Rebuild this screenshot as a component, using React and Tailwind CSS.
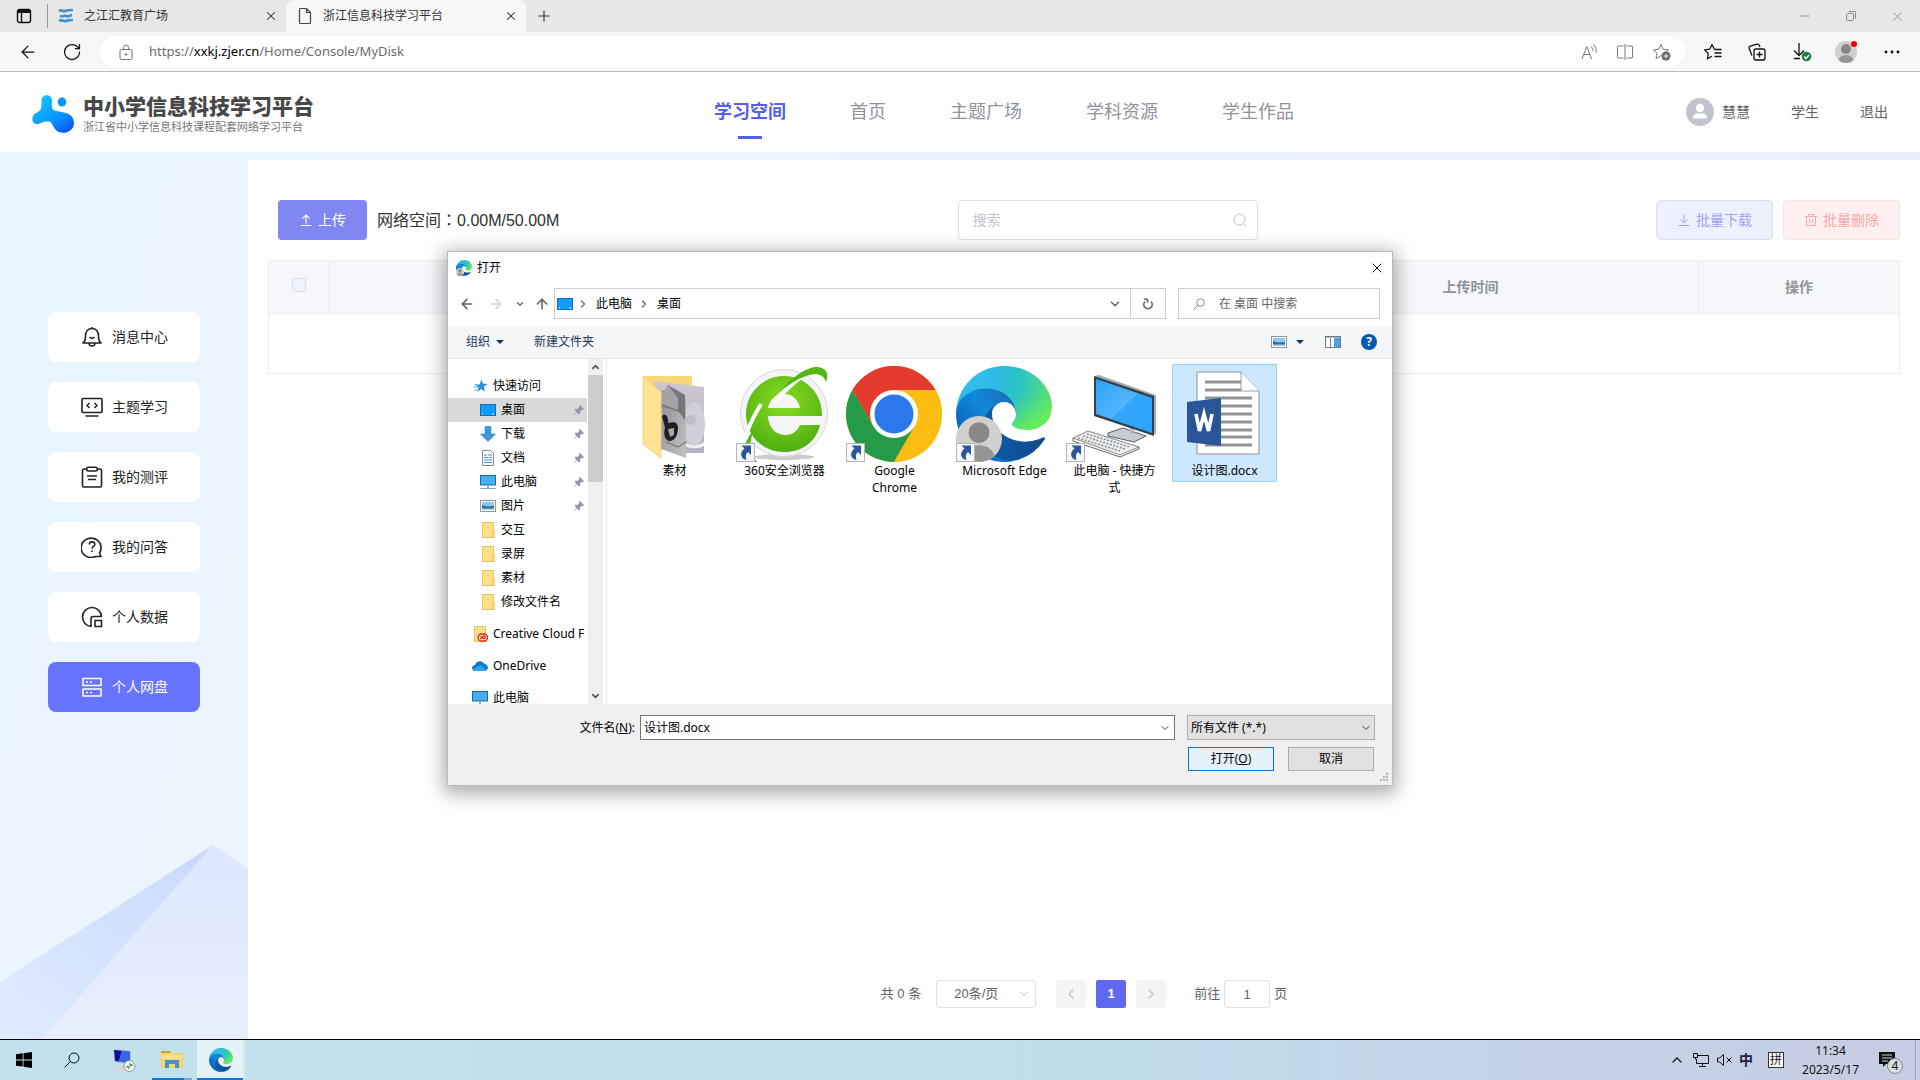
import { useState } from 'react';
import {
  ArrowLeft, ArrowRight, ArrowUp, ChevronDown, ChevronLeft, ChevronRight, ChevronUp,
  Minus, Plus, RotateCw, X,
} from 'lucide-react';

const EdgeLogo = ({ id, className }) => (
  <svg viewBox="0 0 256 256" className={className} aria-hidden="true">
    <defs>
      <linearGradient id={`${id}a`} x1="0.25" y1="0.5" x2="1" y2="0.5">
        <stop offset="0" stopColor="#0c59a4" /><stop offset="1" stopColor="#114a8b" />
      </linearGradient>
      <linearGradient id={`${id}b`} x1="0.9" y1="0.2" x2="0.2" y2="0.9">
        <stop offset="0" stopColor="#1b6fb8" /><stop offset="0.4" stopColor="#1189dd" /><stop offset="1" stopColor="#0a5db5" />
      </linearGradient>
      <radialGradient id={`${id}c`} cx="0.1" cy="0.2" r="1">
        <stop offset="0" stopColor="#35c1f1" /><stop offset="0.3" stopColor="#2fb9e6" />
        <stop offset="0.58" stopColor="#2bc3c4" /><stop offset="1" stopColor="#66eb5a" />
      </radialGradient>
    </defs>
    <g transform="translate(-4.63 -4.92)">
      <path fill={`url(#${id}a)`} d="M235.68 195.46a93.73 93.73 0 0 1-10.54 4.71 101.87 101.87 0 0 1-35.9 6.46c-47.32 0-88.54-32.55-88.54-74.32A31.48 31.48 0 0 1 117.13 105c-42.8 1.8-53.8 46.4-53.8 72.53 0 73.88 68.09 81.37 82.76 81.37 7.91 0 19.84-2.3 27-4.56l1.31-.44a128.34 128.34 0 0 0 66.6-52.8 4 4 0 0 0-5.32-5.64Z" />
      <path fill={`url(#${id}b)`} d="M110.34 246.34A79.2 79.2 0 0 1 87.6 225a80.72 80.72 0 0 1 29.53-120c3.12-1.47 8.45-4.13 15.54-4a32.35 32.35 0 0 1 25.69 13 31.88 31.88 0 0 1 6.36 18.66c0-.21 24.46-79.6-80-79.6-43.9 0-80 41.66-80 78.21a130.15 130.15 0 0 0 12.11 56 128 128 0 0 0 156.38 67.11 75.55 75.55 0 0 1-62.78-8Z" />
      <path fill={`url(#${id}c)`} d="M156.94 153.78c-.81 1.05-3.3 2.5-3.3 5.66 0 2.61 1.7 5.12 4.72 7.23 14.38 10 41.49 8.68 41.56 8.68a59.56 59.56 0 0 0 30.27-8.35 61.38 61.38 0 0 0 30.43-52.88c.26-22.41-8-37.31-11.34-43.91-21.19-41.45-66.93-65.29-116.67-65.29a128 128 0 0 0-128 126.2c.48-36.54 36.8-66.05 80-66.05 3.5 0 23.46.34 42 10.07 16.34 8.58 24.9 18.94 30.85 29.21 6.18 10.67 7.28 24.15 7.28 29.52s-2.74 13.33-7.8 19.91Z" />
    </g>
  </svg>
);

const ShortcutArrow = () => (
  <svg viewBox="0 0 19 19" className="absolute bottom-0 left-0 w-[19px] h-[19px]" aria-hidden="true">
    <rect x="0.5" y="0.5" width="18" height="18" fill="#f8f8f8" stroke="#b5b5b5" />
    <path d="M5.500 2.500h9.500v9.500l-3-3C9.500 11 9.500 13.500 10.500 17C4 15.500 3.500 9.500 8.500 5.500Z" fill="#2b579a" />
  </svg>
);

const UserBadge = ({ className }) => (
  <svg viewBox="0 0 44 44" className={className} aria-hidden="true">
    <clipPath id="badge"><circle cx="22" cy="22" r="22" /></clipPath>
    <g clipPath="url(#badge)">
      <rect width="44" height="44" fill="#d2d0ce" />
      <circle cx="22" cy="16" r="10" fill="#8a8886" />
      <ellipse cx="22" cy="40" rx="15" ry="12" fill="#979593" />
    </g>
  </svg>
);

const FolderPhotos = () => (
  <svg viewBox="0 0 96 96" className="w-24 h-24" aria-hidden="true">
    <defs>
      <linearGradient id="photoBack" x1="0" y1="0" x2="0" y2="1">
        <stop offset="0" stopColor="#cfc7d1" /><stop offset="1" stopColor="#b4b3c1" />
      </linearGradient>
      <linearGradient id="photoFront" x1="0" y1="0" x2="1" y2="1">
        <stop offset="0" stopColor="#8e8e90" /><stop offset="1" stopColor="#c2c2c4" />
      </linearGradient>
    </defs>
    <path d="M17 10h49v60H17z" fill="#f7d874" />
    <path d="M28 15l50 6v66l-30 0z" fill="url(#photoBack)" />
    <ellipse cx="68" cy="58" rx="11" ry="22" fill="#d0d0da" />
    <circle cx="65" cy="54" r="5" fill="#bdbdca" />
    <path d="M59 76c7 5 13 4 19 0v4c-6 3-13 3-19 0z" fill="#f6eef1" />
    <path d="M36 24l24 9v59l-25-9z" fill="url(#photoFront)" />
    <path d="M42 19l17 10v25l-6-8-17-6V28z" fill="#77777a" />
    <path d="M42 19l10 13v12l-16-6V28z" fill="#a3a3a5" />
    <path d="M36 50c4-4 7 2 6 7c5-1 9-2 10 4c0 9-4 14-8 14c-5 0-7-7-5-13z" fill="#202022" />
    <path d="M42 63l6-1v7l-4 2z" fill="#a9a9ac" />
    <path d="M40 76l12 5 8-5" stroke="#646466" fill="none" />
    <path d="M17 10l18 16v66l-18-14z" fill="#ffe394" stroke="#eac765" strokeWidth="0.7" />
  </svg>
);

const Browser360 = () => (
  <svg viewBox="0 0 96 96" className="w-24 h-24" aria-hidden="true">
    <defs>
      <radialGradient id="green360" cx="0.5" cy="0.35" r="0.65">
        <stop offset="0" stopColor="#8bdc22" /><stop offset="1" stopColor="#50b010" />
      </radialGradient>
    </defs>
    <ellipse cx="48" cy="91" rx="30" ry="3" fill="#ccc" />
    <circle cx="48" cy="47" r="43.5" fill="#f3f5f6" stroke="#d4d8dc" />
    <path d="M86 50H32c0 9 6 19 17 19c8 0 12-4 15-10h20C80 76 66 86 48 86C26 86 10 69 10 48S27 10 48 10s38 17 38 38z" fill="url(#green360)" />
    <path d="M32 42c2-9 8-14 16-14s14 5 16 14z" fill="#f3f5f6" />
    <path d="M38 36C56 16 70 4 82 3" stroke="#fff" strokeWidth="5" fill="none" />
    <path d="M25 38C13 58 7 72 9 82" stroke="#fff" strokeWidth="4" fill="none" />
    <path d="M41 28C59 7 78-4 88 3c4 3 4 8 2 13C86 3 68 6 41 28z" fill="#56b615" />
    <path d="M20 60C10 74 5 84 9 90c2 4 6 6 12 6c-8-8-9-21-1-36z" fill="#56b615" />
  </svg>
);

const ChromeLogo = () => (
  <svg viewBox="0 0 96 96" className="w-24 h-24" aria-hidden="true">
    <circle cx="48" cy="48" r="48" fill="#fdbd13" />
    <path d="M6.4 24A48 48 0 0 1 89.6 24H48l-20.8 36z" fill="#e33b2e" />
    <path d="M6.4 24A48 48 0 0 0 48 96L68.8 60L48 48L27.2 60z" fill="#259b48" />
    <path d="M48 24h41.6A48 48 0 0 1 48 96l20.8-36z" fill="#fdbd13" />
    <circle cx="48" cy="48" r="24" fill="#fff" />
    <circle cx="48" cy="48" r="19.5" fill="#2b77ee" />
  </svg>
);

const DesktopPc = () => (
  <svg viewBox="0 0 96 96" className="w-24 h-24" aria-hidden="true">
    <defs>
      <linearGradient id="pcScreen" x1="0" y1="0" x2="1" y2="1">
        <stop offset="0" stopColor="#29a3f8" /><stop offset="0.5" stopColor="#54b5fa" /><stop offset="0.51" stopColor="#35a7fb" /><stop offset="1" stopColor="#2ca4fd" />
      </linearGradient>
    </defs>
    <path d="M42 67l15-5 23 8-12 6-26-6z" fill="#c6ccd2" stroke="#596068" />
    <path d="M66 60v8" stroke="#b6bdc5" strokeWidth="4" />
    <path d="M28 10l5-1 57 20v39l-4 1z" fill="#a3abb3" />
    <path d="M28 10l60 20v40L28 50z" fill="#34414c" />
    <path d="M30 13l56 19v35L30 48z" fill="url(#pcScreen)" />
    <path d="M7 72l15-7 51 16-19 8z" fill="#eceef0" stroke="#888" />
    <path d="M12 72l42 13M17 70l42 13M21 68l43 13" stroke="#8b9198" strokeWidth="1.600" strokeDasharray="2 1.5" />
    <path d="M7 72v3l47 16 19-8v-2" stroke="#666" fill="none" />
  </svg>
);

const WordDoc = () => (
  <svg viewBox="0 0 96 96" className="w-24 h-24" aria-hidden="true">
    <path d="M21 6h44l18 19v63H21z" fill="#fff" stroke="#8b9299" />
    <path d="M65 6v19h18" fill="#fff" stroke="#9aa0a6" />
    <path d="M29 16h36M29 24h36M29 32h47M29 40h47M29 48h47M29 56h47M29 64h47M29 71h47M29 79h47" stroke="#939393" strokeWidth="3" />
    <path d="M11 36l34-4v48l-34-4z" fill="#2a5699" />
    <path d="M20 48l3.500 17 4.500-17 4.500 17L36 48" fill="none" stroke="#fff" strokeWidth="3.600" />
  </svg>
);

const MonitorIcon = ({ stand }) => (
  <svg viewBox="0 0 16 16" className="w-4 h-4 shrink-0" aria-hidden="true">
    <rect x="0.5" y={stand ? 1.5 : 2.5} width="15" height={stand ? 9.500 : 11} fill={stand ? '#45adf0' : '#0f9bff'} stroke="#146eae" />
    {stand ? <path d="M7 11.500h2V14H7zM0.500 14h15v1H0.500z" fill="#8ba5b8" /> : <path d="M2 12h1M12 12h2" stroke="#fff" />}
  </svg>
);

const PictureIcon = () => (
  <svg viewBox="0 0 16 16" className="w-4 h-4 shrink-0" aria-hidden="true">
    <rect x="0.5" y="2.500" width="15" height="11" fill="#fff" stroke="#8c979f" />
    <path d="M2 4h12v8H2z" fill="#8cc6f3" />
    <path d="M2 7l5 1.500 7-.5v4H2z" fill="#356f91" />
    <path d="M2 10.500h12V12H2z" fill="#a5cbe2" />
  </svg>
);

const FolderIcon = ({ cloud }) => (
  <svg viewBox="0 0 16 16" className="w-4 h-4 shrink-0" aria-hidden="true">
    <path d="M2.500 0.500h11v15h-11z" fill="#ffe08a" stroke="#e9c460" />
    <path d="M12.500 9v6.500h2V9z" fill="#fbd56d" stroke="#e0b64f" strokeWidth="0.5" />
    {cloud && (
      <g fill="none" stroke="#d92a1c" strokeWidth="1.300">
        <rect x="6" y="8" width="9.500" height="7" rx="3.500" fill="#fbe6c9" />
        <path d="M8 12.500c1.500 1 2.500-2.500 4-2.500s2 2.500 0 2.500s-2-2-3.500-2" />
      </g>
    )}
  </svg>
);

const StarIcon = () => (
  <svg viewBox="0 0 16 16" className="w-4 h-4 shrink-0" aria-hidden="true">
    <path d="M9.500 1.500l1.300 4 4.700.5-3.600 2.700 1 4.800-3.900-2.500L5.500 14l1-4.500L3.500 7l4-.5z" fill="#2b90dc" />
    <path d="M2.500 6.500h3M1.500 9h4M2.500 12h3" stroke="#65aee5" />
  </svg>
);

const DownArrowIcon = () => (
  <svg viewBox="0 0 16 16" className="w-4 h-4 shrink-0" aria-hidden="true">
    <path d="M5 0.500h6V8h4.500L8 15.500 0.500 8H5z" fill="#3b96dd" stroke="#2a7dc0" strokeWidth="0.5" />
  </svg>
);

const PaperIcon = () => (
  <svg viewBox="0 0 16 16" className="w-4 h-4 shrink-0" aria-hidden="true">
    <path d="M2.500 0.500h8l3 3v12h-11z" fill="#fff" stroke="#828b92" />
    <path d="M4 5h3M8 5h4M4 7.500h4M9 7.500h3M4 10h8M4 12.500h8" stroke="#4a93c5" />
  </svg>
);

const CloudIcon = () => (
  <svg viewBox="0 0 16 16" className="w-4 h-4 shrink-0" aria-hidden="true">
    <path d="M3 7C4 3 10 1.500 12.500 6c5 1 4 7 0 7H3.500C-1 13-1 7.500 3 7z" fill="#1278cf" />
    <path d="M1 11l8-4 5 5c-.5.700-1 1-2 1H3.500C2.500 13 1.500 12.500 1 11z" fill="#28a8ea" />
  </svg>
);

const PinIcon = () => (
  <svg viewBox="0 0 12 12" className="w-3 h-3" aria-hidden="true">
    <path d="M7 1l4 4-1 1-1-.3L7 7.500l.2 2L6 10.500 3.800 8.300 1 11l-.3-.3L3.300 7.800 1.500 6l1-1.200 2 .2L6.300 3 6 2z" fill="#8d9aa5" />
  </svg>
);

const Caret = () => (
  <svg viewBox="0 0 8 4" className="w-2 h-1" aria-hidden="true"><path d="M0 0h8L4 4z" fill="#1c355e" /></svg>
);

const SearchGlyph = ({ className }) => (
  <svg viewBox="0 0 16 16" className={className} fill="none" stroke="currentColor" aria-hidden="true">
    <circle cx="10" cy="6" r="5" /><path d="M6.500 9.500L0.500 15.500" />
  </svg>
);

// sidebar menu glyphs
const MenuGlyph = ({ name }) => (
  <svg viewBox="0 0 22 22" className="w-[22px] h-[22px]" fill="none" stroke="currentColor" strokeWidth="1.600" strokeLinejoin="round" aria-hidden="true">
    {name === 'bell' && <path d="M11 1v1.500M2 17h18c-2-1.500-2.500-3-2.500-7C17.500 5.500 15 2.500 11 2.500S4.500 5.500 4.500 10c0 4-.5 5.500-2.500 7zM8 17.500c.5 3.500 5.500 3.500 6 0M8.500 11c1.500 1.500 3.500 1.500 5 0" />}
    {name === 'code' && <path d="M2 2.500h18a1 1 0 0 1 1 1v12a1 1 0 0 1-1 1H2a1 1 0 0 1-1-1v-12a1 1 0 0 1 1-1zM4.500 20h13M8.500 7L6 9.500 8.500 12M13.500 7L16 9.500 13.500 12" />}
    {name === 'task' && <path d="M6 3H3a1.500 1.500 0 0 0-1.500 1.500v15A1.500 1.500 0 0 0 3 21h16a1.500 1.500 0 0 0 1.500-1.500v-15A1.500 1.500 0 0 0 19 3h-3M7.500 1.200h7a1.500 1.500 0 0 1 0 3.800h-7a1.500 1.500 0 0 1 0-3.800zM6 10h10M7 13.500h8" />}
    {name === 'ask' && <path d="M20 20.500h-5.500A10 9.700 0 1 1 18.500 17zM8.300 8.500c0-3.500 5.500-3.500 5.500 0 0 2-2.700 2-2.700 4.200M11 14.500v1.500" />}
    {name === 'data' && <path d="M10 20.500A9.500 9.500 0 1 1 20.500 10.500H12a2 2 0 0 0-2 2zM14 14.500h6.500v6H14z" />}
    {name === 'disk' && <path d="M2 2.500h18v7H2zM2 13h18v7H2zM5 6h2M9 6h2M5 16.500h2M9 16.500h2" />}
  </svg>
);

const menu = [
  { icon: 'bell', label: '消息中心' },
  { icon: 'code', label: '主题学习' },
  { icon: 'task', label: '我的测评' },
  { icon: 'ask', label: '我的问答' },
  { icon: 'data', label: '个人数据' },
  { icon: 'disk', label: '个人网盘' },
];

const navItems = ['学习空间', '首页', '主题广场', '学科资源', '学生作品'];

const quickAccess = [
  { label: '桌面', icon: <MonitorIcon />, pinned: true },
  { label: '下载', icon: <DownArrowIcon />, pinned: true },
  { label: '文档', icon: <PaperIcon />, pinned: true },
  { label: '此电脑', icon: <MonitorIcon stand />, pinned: true },
  { label: '图片', icon: <PictureIcon />, pinned: true },
  { label: '交互', icon: <FolderIcon /> },
  { label: '录屏', icon: <FolderIcon /> },
  { label: '素材', icon: <FolderIcon /> },
  { label: '修改文件名', icon: <FolderIcon /> },
];

const files = [
  { name: '素材', icon: <FolderPhotos /> },
  { name: '360安全浏览器', icon: <Browser360 />, shortcut: true },
  { name: 'Google Chrome', icon: <ChromeLogo />, shortcut: true },
  { name: 'Microsoft Edge', icon: <><EdgeLogo id="big" className="w-24 h-24" /><UserBadge className="absolute left-0 bottom-0 w-[46px] h-[46px]" /></>, shortcut: true },
  { name: '此电脑 - 快捷方式', icon: <DesktopPc />, shortcut: true },
  { name: '设计图.docx', icon: <WordDoc /> },
];

function BrowserChrome() {
  return (
    <div className="shrink-0 text-[#333]">
      <div className="h-8 bg-[#e7e7e7] flex items-stretch text-xs">
        <button className="w-12 flex items-center justify-center border-r border-[#999] my-1" aria-label="标签页操作">
          <svg viewBox="0 0 16 16" className="w-4 h-4" fill="none" stroke="#111" strokeWidth="1.400"><rect x="1.500" y="1.500" width="13" height="13" rx="2" /><path d="M2 3.500h12" strokeWidth="3" /><path d="M5.500 4v10" /></svg>
        </button>
        <div className="w-[238px] flex items-center pl-[10px] pr-2 gap-[10px]">
          <svg viewBox="0 0 16 16" className="w-4 h-4" fill="none" stroke="#3c93d4" strokeWidth="2.600"><path d="M1 3c3-2 4 1 6 0s4-1 8-1M2 8c3 1 4-1 6 0s4 0 6-1M1 13c3-2 5 1 7 0s4-1 7-1" /></svg>
          <span className="flex-1">之江汇教育广场</span>
          <button aria-label="关闭"><X className="w-[14px] h-[14px]" strokeWidth={1.8} /></button>
        </div>
        <div className="w-60 flex items-center pl-[11px] pr-2 gap-[10px] bg-[#f7f7f7] rounded-t-lg">
          <svg viewBox="0 0 16 18" className="w-4 h-[18px]" fill="none" stroke="#444" strokeWidth="1.200"><path d="M9.500 1.500H3.500a1 1 0 0 0-1 1v13a1 1 0 0 0 1 1h9a1 1 0 0 0 1-1V5.500zM9.500 1.500v4h4" /></svg>
          <span className="flex-1">浙江信息科技学习平台</span>
          <button aria-label="关闭"><X className="w-[14px] h-[14px]" strokeWidth={1.8} /></button>
        </div>
        <button className="w-9 flex items-center justify-center" aria-label="新标签页"><Plus className="w-[18px] h-[18px]" strokeWidth={1.5} /></button>
        <div className="ml-auto flex text-[#888]">
          <button className="w-[46px] flex items-center justify-center" aria-label="最小化"><Minus className="w-[14px] h-[14px]" strokeWidth={1.5} /></button>
          <button className="w-[46px] flex items-center justify-center" aria-label="还原">
            <svg viewBox="0 0 10 10" className="w-[10px] h-[10px]" fill="none" stroke="currentColor"><rect x="0.5" y="2.500" width="7" height="7" rx="1" /><path d="M2.500 0.500h6a1 1 0 0 1 1 1v6" /></svg>
          </button>
          <button className="w-[46px] flex items-center justify-center" aria-label="关闭窗口"><X className="w-[15px] h-[15px]" strokeWidth={1.3} /></button>
        </div>
      </div>
      <div className="h-10 bg-[#f7f7f7] border-b border-[#bbb] flex items-center pl-[18px] pr-[15px] text-[#111]">
        <button aria-label="返回"><ArrowLeft className="w-5 h-5" strokeWidth={1.5} /></button>
        <button className="ml-6" aria-label="刷新"><RotateCw className="w-5 h-5" strokeWidth={1.5} /></button>
        <div className="relative ml-[18px] flex-1 h-[31px] bg-white rounded-full flex items-center pl-[19px] pr-[14px] gap-5 text-[#777]">
          <svg viewBox="0 0 14 16" className="w-[14px] h-4" fill="none" stroke="currentColor"><rect x="1" y="5.500" width="12" height="10" rx="1.500" /><path d="M4.500 5.500V3.500a2.500 2.500 0 0 1 5 0v2" /><circle cx="7" cy="10.500" r="0.8" fill="currentColor" /></svg>
          <span className="-ml-1 flex-1 text-[13px] text-[#6b6b6b] font-['Noto_Sans']">https://<span className="text-black">xxkj.zjer.cn</span>/Home/Console/MyDisk</span>
          <input type="text" aria-label="地址栏" className="absolute inset-0 bg-transparent outline-none rounded-full" />
          <svg viewBox="0 0 16 16" className="w-4 h-4" fill="none" stroke="currentColor"><path d="M1 15L5.800 2.500 10.500 15M2.800 10.500h6M9.500 2c2 1.500 2.500 3 2.500 5M12 0.500c3 2 3.500 5 3 8" /></svg>
          <svg viewBox="0 0 16 16" className="w-4 h-4" fill="none" stroke="currentColor"><path d="M6.500 2h-5a1 1 0 0 0-1 1v10a1 1 0 0 0 1 1h5M9.500 2h5a1 1 0 0 1 1 1v10a1 1 0 0 1-1 1h-5M8 0v16" /></svg>
          <svg viewBox="0 0 18 18" className="w-[18px] h-[18px]" fill="none" stroke="currentColor"><path d="M8 1.500l2.200 4.700 5.200.7-3.900 3.500L6 14l-3 1.500 1-5.200L.6 6.900l5.100-.7z" strokeLinejoin="round" /><circle cx="13" cy="13" r="4.500" fill="#666" stroke="none" /><path d="M13 10.500v5M10.500 13h5" stroke="#fff" /></svg>
        </div>
        <button className="ml-[19px]" aria-label="收藏夹">
          <svg viewBox="0 0 18 18" className="w-[18px] h-[18px]" fill="none" stroke="currentColor" strokeWidth="1.300" strokeLinejoin="round"><path d="M10.500 6.500L8 1.500 5.700 6.200.6 6.900l3.700 3.600-.9 5.300 4.600-2.500M10.500 6.500h7M10.500 10h7M10.500 13.500h7" /></svg>
        </button>
        <button className="ml-[26px]" aria-label="集锦">
          <svg viewBox="0 0 18 18" className="w-[18px] h-[18px]" fill="none" stroke="currentColor" strokeWidth="1.300" strokeLinejoin="round"><rect x="6" y="6" width="11" height="11" rx="2" /><path d="M11.500 8.500v6M8.500 11.500h6M4 12.500L1.200 5.500c-.5-1 0-2 1-2.300L9 1.200c1-.3 2 .2 2.400 1.200l.6 1.600" /></svg>
        </button>
        <button className="ml-[26px]" aria-label="下载">
          <svg viewBox="0 0 20 20" className="w-5 h-5" fill="none" stroke="currentColor" strokeWidth="1.300"><path d="M7 1v12M2 8.500l5 5 5-5M2 16.500h6" /><circle cx="14.500" cy="14.500" r="4.800" fill="#1d8043" stroke="none" /><path d="M12 14.500l2 2 3-3.500" stroke="#fff" /></svg>
        </button>
        <button className="ml-[23px] relative" aria-label="个人资料">
          <UserBadge className="w-[22px] h-[22px]" />
          <span className="absolute right-0 top-0 w-[6px] h-[6px] rounded-full bg-[#e00]" />
        </button>
        <button className="ml-5" aria-label="更多"><svg viewBox="0 0 28 16" className="w-7 h-4" fill="#111"><circle cx="9" cy="8" r="1.400" /><circle cx="15" cy="8" r="1.400" /><circle cx="21" cy="8" r="1.400" /></svg></button>
      </div>
    </div>
  );
}

function SiteHeader() {
  return (
    <header className="h-20 shrink-0 bg-white flex items-center justify-between px-8">
      <div className="w-[290px] flex items-center gap-[9px]">
        <svg viewBox="0 0 42 38" className="w-[42px] h-[38px] mt-1" aria-hidden="true">
          <defs>
            <linearGradient id="logoBlue" x1="0.2" y1="0" x2="0.9" y2="1">
              <stop offset="0" stopColor="#11c5ff" /><stop offset="0.6" stopColor="#0b93ff" /><stop offset="1" stopColor="#0a4dfa" />
            </linearGradient>
          </defs>
          <path fill="url(#logoBlue)" d="M9.500 5C9.500-1.500 20-1.500 20 5C20 10 19 13.500 22 15.500C27 17.500 42 16 42 28C42 38 28 41 23 34C19 28 20 26.500 15 26.500C10 26.500 9 29 5 29C-1 29-1 20 4 18C10 16 9.500 12 9.500 5Z" />
          <ellipse cx="30" cy="7" rx="4.300" ry="4.500" fill="#0d94fb" />
        </svg>
        <div className="pt-[5px]">
          <h1 className="text-[21px] leading-6 font-black text-[#484848] whitespace-nowrap">中小学信息科技学习平台</h1>
          <p className="text-[11px] leading-4 text-[#777] whitespace-nowrap">浙江省中小学信息科技课程配套网络学习平台</p>
        </div>
      </div>
      <nav className="flex gap-16 text-lg leading-6">
        {navItems.map((item, i) => (
          <a key={item} href="#" className={i === 0 ? 'relative font-bold text-[#5560e6]' : 'text-[#909399]'}>
            {item}
            {i === 0 && <span className="absolute left-6 right-6 top-9 h-[3px] bg-[#5560e6]" />}
          </a>
        ))}
      </nav>
      <div className="flex items-center text-sm text-[#606266]">
        <svg viewBox="0 0 28 28" className="w-7 h-7 mr-2" aria-hidden="true">
          <circle cx="14" cy="14" r="14" fill="#c0c4cc" /><circle cx="14" cy="10" r="4.200" fill="#fff" /><path d="M7 20.500c0-4 2-5 4-5h6c2 0 4 1 4 5z" fill="#fff" />
        </svg>
        <span>慧慧</span>
        <span className="ml-[41px]">学生</span>
        <a href="#" className="ml-[41px]">退出</a>
      </div>
    </header>
  );
}

function Sidebar() {
  return (
    <aside className="relative w-[248px] shrink-0 pt-[152px] flex flex-col items-center gap-5 bg-gradient-to-br from-[#e8f6ff] to-[#eef4fe]">
      <svg viewBox="0 0 248 194" className="absolute left-0 bottom-0 w-[248px] h-[194px]" aria-hidden="true">
        <defs>
          <linearGradient id="hillA" x1="1" y1="0" x2="0" y2="1"><stop offset="0" stopColor="#c9d9fd" /><stop offset="1" stopColor="#deedff" /></linearGradient>
          <linearGradient id="hillB" x1="0" y1="0" x2="0" y2="1"><stop offset="0" stopColor="#dce7fd" /><stop offset="1" stopColor="#e9effe" /></linearGradient>
        </defs>
        <path d="M213 0L0 137v57h50z" fill="url(#hillA)" />
        <path d="M213 0L42 194h206V24z" fill="url(#hillB)" />
      </svg>
      {menu.map((m, i) => (
        <button key={m.label} className={`w-[152px] h-[50px] rounded-lg flex items-center pl-8 gap-2 text-sm ${i === 5 ? 'bg-[#6674ff] text-white' : 'bg-white text-[#222]'}`}>
          <span className="w-6 flex justify-center"><MenuGlyph name={m.icon} /></span>
          {m.label}
        </button>
      ))}
    </aside>
  );
}

function DiskPage() {
  return (
    <main className="flex-1 bg-white px-5 pt-10 flex flex-col">
      <div className="flex items-center justify-between pl-[10px]">
        <div className="flex items-center gap-[10px]">
          <button className="w-[89px] h-10 rounded bg-[#8087f2] text-white text-sm flex items-center justify-center gap-[5px]">
            <svg viewBox="0 0 14 14" className="w-[14px] h-[14px]" fill="none" stroke="currentColor" strokeWidth="1.200"><path d="M7 10.500V2M3.500 5.500L7 2l3.500 3.500M1.500 12.500h11" /></svg>
            上传
          </button>
          <span className="text-base text-[#303133]">
            网络空间<span className="font-['Noto_Sans_CJK_TC',sans-serif]">：</span>0.00M/50.00M
          </span>
        </div>
        <div className="w-[300px] h-10 border border-[#dcdfe6] rounded flex items-center px-[14px]">
          <input type="text" aria-label="搜索" placeholder="搜索" className="flex-1 min-w-0 text-sm outline-none placeholder-[#c0c4cc]" />
          <svg viewBox="0 0 14 14" className="w-[14px] h-[14px] -mr-1" fill="none" stroke="#c0c4cc"><circle cx="6.500" cy="6.500" r="5.500" /><path d="M10.500 10.500l2.500 2.500" /></svg>
        </div>
        <div className="flex gap-[10px] text-sm">
          <button className="w-[117px] h-10 rounded border border-[#dddffa] bg-[#eff0fe] text-[#9fa3f0] flex items-center justify-center gap-[5px]">
            <svg viewBox="0 0 14 14" className="w-[14px] h-[14px]" fill="none" stroke="currentColor"><path d="M7 1.500V10M3.500 6.500L7 10l3.500-3.500M1.500 12.500h11" /></svg>
            批量下载
          </button>
          <button className="w-[117px] h-10 rounded border border-[#fde2e2] bg-[#fef0f0] text-[#f9a7a7] flex items-center justify-center gap-[5px]">
            <svg viewBox="0 0 14 14" className="w-[14px] h-[14px]" fill="none" stroke="currentColor"><path d="M1 3.500h12M2.500 3.500v9h9v-9M4.500 3.500v-2h5v2M5.500 6v4M8.500 6v4" /></svg>
            批量删除
          </button>
        </div>
      </div>
      <div className="flex-1 pt-5">
        <table className="w-full table-fixed border-collapse border border-[#ebeef5] text-sm text-[#909399]">
          <thead>
            <tr className="h-[53px] bg-[#f5f7fa]">
              <th className="w-[60px] border border-[#ebeef5]">
                <input type="checkbox" aria-label="全选" className="appearance-none block mx-auto -mt-1 w-[14px] h-[14px] border border-[#dcdfe6] rounded-xs bg-[#edf2fc]" />
              </th>
              <th className="border border-[#ebeef5]" />
              <th className="w-[456px] border border-[#ebeef5]">上传时间</th>
              <th className="w-[201px] border border-[#ebeef5]">操作</th>
            </tr>
          </thead>
          <tbody>
            <tr className="h-[60px]"><td colSpan={4} /></tr>
          </tbody>
        </table>
      </div>
      <div className="flex items-center justify-center pb-[31px] text-[13px] text-[#606266]">
        <span>共 0 条</span>
        <div className="relative ml-[15px]">
          <select aria-label="每页条数" className="appearance-none w-[100px] h-7 pl-[17px] border border-[#dcdfe6] rounded-[3px] bg-white">
            <option>20条/页</option>
          </select>
          <ChevronDown className="absolute right-[6px] top-2 w-3 h-3 text-[#c0c4cc]" />
        </div>
        <button className="ml-5 w-[30px] h-7 bg-[#f4f4f5] rounded-sm flex items-center justify-center text-[#c0c4cc]" aria-label="上一页"><ChevronLeft className="w-4 h-4" /></button>
        <button className="ml-[10px] w-[30px] h-7 bg-[#5f69ef] rounded-xs text-white font-bold">1</button>
        <button className="ml-[10px] w-[30px] h-7 bg-[#f4f4f5] rounded-sm flex items-center justify-center text-[#c0c4cc]" aria-label="下一页"><ChevronRight className="w-4 h-4" /></button>
        <label className="ml-7 flex items-center gap-1">
          前往
          <input type="text" defaultValue="1" className="w-[46px] h-7 border border-[#dcdfe6] rounded-[3px] text-center outline-none" />
          页
        </label>
      </div>
    </main>
  );
}

function OpenDialog({ onClose }) {
  const [selected, setSelected] = useState('设计图.docx');

  return (
    <div role="dialog" aria-label="打开" className="absolute left-[448px] top-[252px] w-[944px] bg-white text-xs leading-4 text-black ring-1 ring-[#bbb] shadow-[0_4px_18px_4px_rgba(0,0,0,0.35)]">
      <div className="h-8 mb-1 flex items-center pl-2 pr-[7px] gap-[5px]">
        <span className="relative">
          <EdgeLogo id="title" className="w-4 h-4" />
          <UserBadge className="absolute left-0 bottom-0 w-2 h-2" />
        </span>
        <span className="flex-1">打开</span>
        <button onClick={onClose} aria-label="关闭"><X className="w-4 h-4" strokeWidth={1.5} /></button>
      </div>

      <div className="h-[31px] mb-[7px] flex items-stretch pl-[5px] pr-3 text-[#666]">
        <button className="w-7 flex items-center justify-center" aria-label="后退"><ArrowLeft className="w-4 h-4" strokeWidth={2.4} /></button>
        <button className="w-[30px] flex items-center justify-center text-[#d0d0d0]" aria-label="前进"><ArrowRight className="w-4 h-4" strokeWidth={2} /></button>
        <button className="w-[18px] flex items-center justify-center" aria-label="最近位置"><ChevronDown className="w-[10px] h-[10px]" strokeWidth={3} /></button>
        <button className="w-[25px] flex items-center justify-center" aria-label="向上"><ArrowUp className="w-4 h-4" strokeWidth={2.4} /></button>
        <div className="flex-1 flex border border-[#d0d0d0]">
          <div className="flex-1 flex items-center pl-[2px] pr-2">
            <MonitorIcon />
            <ChevronRight className="mx-1 w-3 h-3" strokeWidth={2.6} />
            <span className="ml-[3px] text-black">此电脑</span>
            <ChevronRight className="mx-[6px] w-3 h-3" strokeWidth={2.6} />
            <span className="ml-[1px] text-black">桌面</span>
            <ChevronDown className="ml-auto w-[14px] h-[14px]" strokeWidth={2.6} />
          </div>
          <button className="w-[35px] border-l border-[#d0d0d0] flex items-center justify-center" aria-label="刷新">
            <svg viewBox="0 0 12 12" className="w-3 h-3" fill="none" stroke="currentColor" strokeWidth="1.600"><path d="M3 3.500A4.200 4.200 0 1 0 9 3.500M2 1.200h3.500v3.500" /></svg>
          </button>
        </div>
        <div className="ml-3 w-[202px] border border-[#d0d0d0] flex items-center pl-[14px] gap-[14px]">
          <SearchGlyph className="w-3 h-3 shrink-0" />
          <input type="text" aria-label="在 桌面 中搜索" placeholder="在 桌面 中搜索" className="flex-1 min-w-0 outline-none placeholder-[#666]" />
        </div>
      </div>

      <div className="h-8 bg-[#f5f6f7] flex items-center pl-[18px] pr-[15px] text-[#1e395b]">
        <button className="flex items-center gap-[6px]">组织 <Caret /></button>
        <button className="ml-[30px]">新建文件夹</button>
        <button className="ml-auto flex items-center gap-[9px]" aria-label="更改视图"><PictureIcon /><Caret /></button>
        <button className="ml-[21px]" aria-label="预览窗格">
          <svg viewBox="0 0 16 16" className="w-4 h-4"><rect x="0.5" y="2.500" width="15" height="11" fill="#fff" stroke="#697b88" /><path d="M9 4h6v9H9z" fill="#4da3e2" /><path d="M5.500 4v9M0 3h16" stroke="#697b88" /></svg>
        </button>
        <button className="ml-5 w-4 h-4 rounded-full bg-[#0059b3] text-white font-bold leading-4" aria-label="帮助">?</button>
      </div>

      <div className="h-[346px] flex border-t border-[#e3e5e8]">
        <div className="w-[140px] pt-[15px] overflow-hidden whitespace-nowrap">
          <div className="h-6 pl-6 flex items-center gap-[5px]"><StarIcon />快速访问</div>
          {quickAccess.map((q, i) => (
            <div key={q.label} className={`h-6 pl-8 pr-[2px] mr-[1px] flex items-center gap-[5px] ${i === 0 ? 'bg-[#d9d9d9]' : ''}`}>
              {q.icon}
              <span className="flex-1">{q.label}</span>
              {q.pinned && <PinIcon />}
            </div>
          ))}
          <div className="mt-2 h-6 pl-6 flex items-center gap-[5px]"><FolderIcon cloud />Creative Cloud F</div>
          <div className="mt-2 h-6 pl-6 flex items-center gap-[5px]"><CloudIcon />OneDrive</div>
          <div className="mt-2 h-6 pl-6 flex items-center gap-[5px]"><MonitorIcon stand />此电脑</div>
        </div>
        <div className="w-[15px] bg-[#f0f0f0] flex flex-col items-center text-[#555]">
          <ChevronUp className="h-4 w-[11px] shrink-0" strokeWidth={3.5} />
          <div className="w-full h-[107px] bg-[#cdcdcd]" />
          <div className="flex-1" />
          <ChevronDown className="h-4 w-[11px] shrink-0" strokeWidth={3.5} />
        </div>
        <div className="ml-[3px] flex-1 border-l border-[#eee] pl-[15px] pt-[5px] flex items-start gap-[5px]">
          {files.map((f) => (
            <button
              key={f.name}
              onClick={() => setSelected(f.name)}
              className={`w-[105px] pb-[2px] flex flex-col items-center border ${selected === f.name ? 'bg-[#cce8ff] border-[#99d1ff]' : 'border-transparent'}`}
            >
              <span className="relative mt-[1px] mr-[1px]">{f.icon}{f.shortcut && <ShortcutArrow />}</span>
              <span className="px-2 leading-[17px]">{f.name}</span>
            </button>
          ))}
        </div>
      </div>

      <div className="relative bg-[#f0f0f0] pt-[11px] pb-[14px]">
        <div className="h-[25px] flex items-stretch pr-[17px]">
          <label htmlFor="filename" className="w-[187px] self-center text-right">文件名(<u>N</u>):</label>
          <div className="ml-[5px] flex-1 flex items-center bg-white border border-[#777] px-[3px]">
            <input id="filename" type="text" value={selected} onChange={(e) => setSelected(e.target.value)} className="flex-1 outline-none" />
            <ChevronDown className="w-3 h-3 text-[#444]" strokeWidth={2} />
          </div>
          <div className="relative ml-3 w-[188px]">
            <select aria-label="文件类型" className="appearance-none w-full h-[25px] pl-[3px] bg-[#e1e1e1] border border-[#adadad]">
              <option>所有文件 (*.*)</option>
            </select>
            <ChevronDown className="absolute right-[3px] top-[7px] w-3 h-3 text-[#444]" strokeWidth={2} />
          </div>
        </div>
        <div className="mt-[7px] flex justify-end gap-[14px] pr-[18px]">
          <button onClick={onClose} className="w-[86px] h-6 bg-[#e5f1fb] border border-[#0078d7]">打开(<u>O</u>)</button>
          <button onClick={onClose} className="w-[86px] h-6 bg-[#e1e1e1] border border-[#adadad]">取消</button>
        </div>
        <svg viewBox="0 0 8 8" className="absolute right-1 bottom-1 w-2 h-2" fill="#b5b5b5" aria-hidden="true"><path d="M6 0h2v2H6zM6 3h2v2H6zM3 3h2v2H3zM0 6h2v2H0zM3 6h2v2H3zM6 6h2v2H6z" /></svg>
      </div>
    </div>
  );
}

function Taskbar() {
  return (
    <footer className="h-[41px] shrink-0 border-t border-black bg-gradient-to-r from-[#c1e2ec] via-[#c0dfeb] to-[#c6cce3] flex items-stretch text-xs text-[#111]">
      <button className="w-12 flex items-center justify-center" aria-label="开始">
        <svg viewBox="0 0 16 16" className="w-4 h-4"><path d="M0 2.200l6.700-.9v6.200H0zM7.500 1.200L16 0v7.500H7.500zM0 8.400h6.700v6.200L0 13.700zM7.500 8.400H16V16l-8.500-1.200z" /></svg>
      </button>
      <button className="w-12 mr-1 flex items-center justify-center" aria-label="搜索"><SearchGlyph className="w-4 h-4" /></button>
      <button className="w-12 flex items-center justify-center" aria-label="远程桌面">
        <svg viewBox="0 0 24 24" className="w-6 h-6">
          <ellipse cx="10" cy="21" rx="7" ry="2.500" fill="#d6d6d6" />
          <path d="M1 1l18 1.500v14L3 14.500z" fill="#b9c0cc" />
          <path d="M2 2l8 .7-3 10.800-4-.5z" fill="#0b0f9c" /><path d="M10 2.700l8 .7v12l-11-1.900z" fill="#3563ea" />
          <circle cx="17.500" cy="18" r="5.500" fill="#f3f3f3" stroke="#999" />
          <path d="M14.500 18.500l2.500 2M14.500 18.500h2.500v2M20.500 16l-2.500 1.500M18 15v2.500h2.500" stroke="#2d8b3a" fill="none" />
        </svg>
      </button>
      <button className="w-12 relative flex items-center justify-center" aria-label="文件资源管理器">
        <svg viewBox="0 0 22 20" className="w-[22px] h-5">
          <path d="M0 1h9l1 2H0z" fill="#d99e1d" /><path d="M0 3h22v15H0z" fill="#fdd365" /><path d="M4 10h14v8h-4v-4H8v4H4z" fill="#4591cb" /><path d="M1 5h20v4H1z" fill="#ffe08a" />
        </svg>
        <span className="absolute left-1 right-3 bottom-0 h-[2px] bg-[#0f78d4]" />
        <span className="absolute w-2 right-1 bottom-0 h-[2px] bg-[#6fa9de]" />
      </button>
      <button className="ml-[1px] w-12 relative flex items-center justify-center bg-[#e5f2f7] border-r-2 border-[#d3e9f1]" aria-label="Microsoft Edge">
        <EdgeLogo id="task" className="w-6 h-6 ml-[2px]" />
        <span className="absolute inset-x-0 bottom-0 h-[2px] bg-[#0f78d4]" />
      </button>
      <div className="ml-auto flex items-center">
        <ChevronUp className="w-4 h-4" strokeWidth={1.8} />
        <svg viewBox="0 0 16 14" className="ml-2 w-4 h-[14px]" fill="none" stroke="#111"><path d="M5 2.500h10.500v8H3.500V6M9.500 10.500v3M6 13.500h7M0.500 0.500h4v4h-4zM2.500 4.500v2" /></svg>
        <svg viewBox="0 0 16 14" className="ml-2 w-4 h-[14px]" fill="none" stroke="#111"><path d="M0.500 5h2l4-3.500v11L2.500 9h-2zM9.500 4.500l5 5M14.500 4.500l-5 5" /></svg>
        <span className="ml-[6px] text-sm font-bold text-[#224]">中</span>
        <span className="ml-[15px] w-4 h-4 border border-[#333] bg-white leading-[14px] text-center">拼</span>
        <div className="ml-[18px] text-center leading-[19px] font-['Noto_Sans']">
          <div>11:34</div>
          <div>2023/5/17</div>
        </div>
        <button className="relative ml-5 w-[25px] h-7" aria-label="通知">
          <svg viewBox="0 0 25 28" className="w-[25px] h-7">
            <path d="M0 6h16v12H7l-3 3v-3H0z" fill="#111" /><path d="M3 9h10M3 12h10M3 15h6" stroke="#c6cfe3" />
            <circle cx="16" cy="20" r="7.500" fill="#dadde2" stroke="#888" />
          </svg>
          <span className="absolute left-3 top-3 w-2 text-center leading-4 font-['Noto_Sans']">4</span>
        </button>
        <span className="ml-[11px] mr-1 w-px h-10 bg-[#9aa5bd]" />
      </div>
    </footer>
  );
}

function App() {
  const [dialogOpen, setDialogOpen] = useState(true);

  return (
    <div className="relative min-h-screen flex flex-col overflow-hidden font-['Liberation_Sans','Noto_Sans_CJK_SC',sans-serif]">
      <BrowserChrome />
      <SiteHeader />
      <div className="flex-1 flex flex-col pt-2 bg-gradient-to-r from-[#e9f6ff] to-[#eceefc]">
        <div className="flex-1 flex">
          <Sidebar />
          <DiskPage />
        </div>
      </div>
      <Taskbar />
      {dialogOpen && (
        <div className="font-['Noto_Sans','Noto_Sans_CJK_SC',sans-serif]">
          <OpenDialog onClose={() => setDialogOpen(false)} />
        </div>
      )}
    </div>
  );
}

export default App;
